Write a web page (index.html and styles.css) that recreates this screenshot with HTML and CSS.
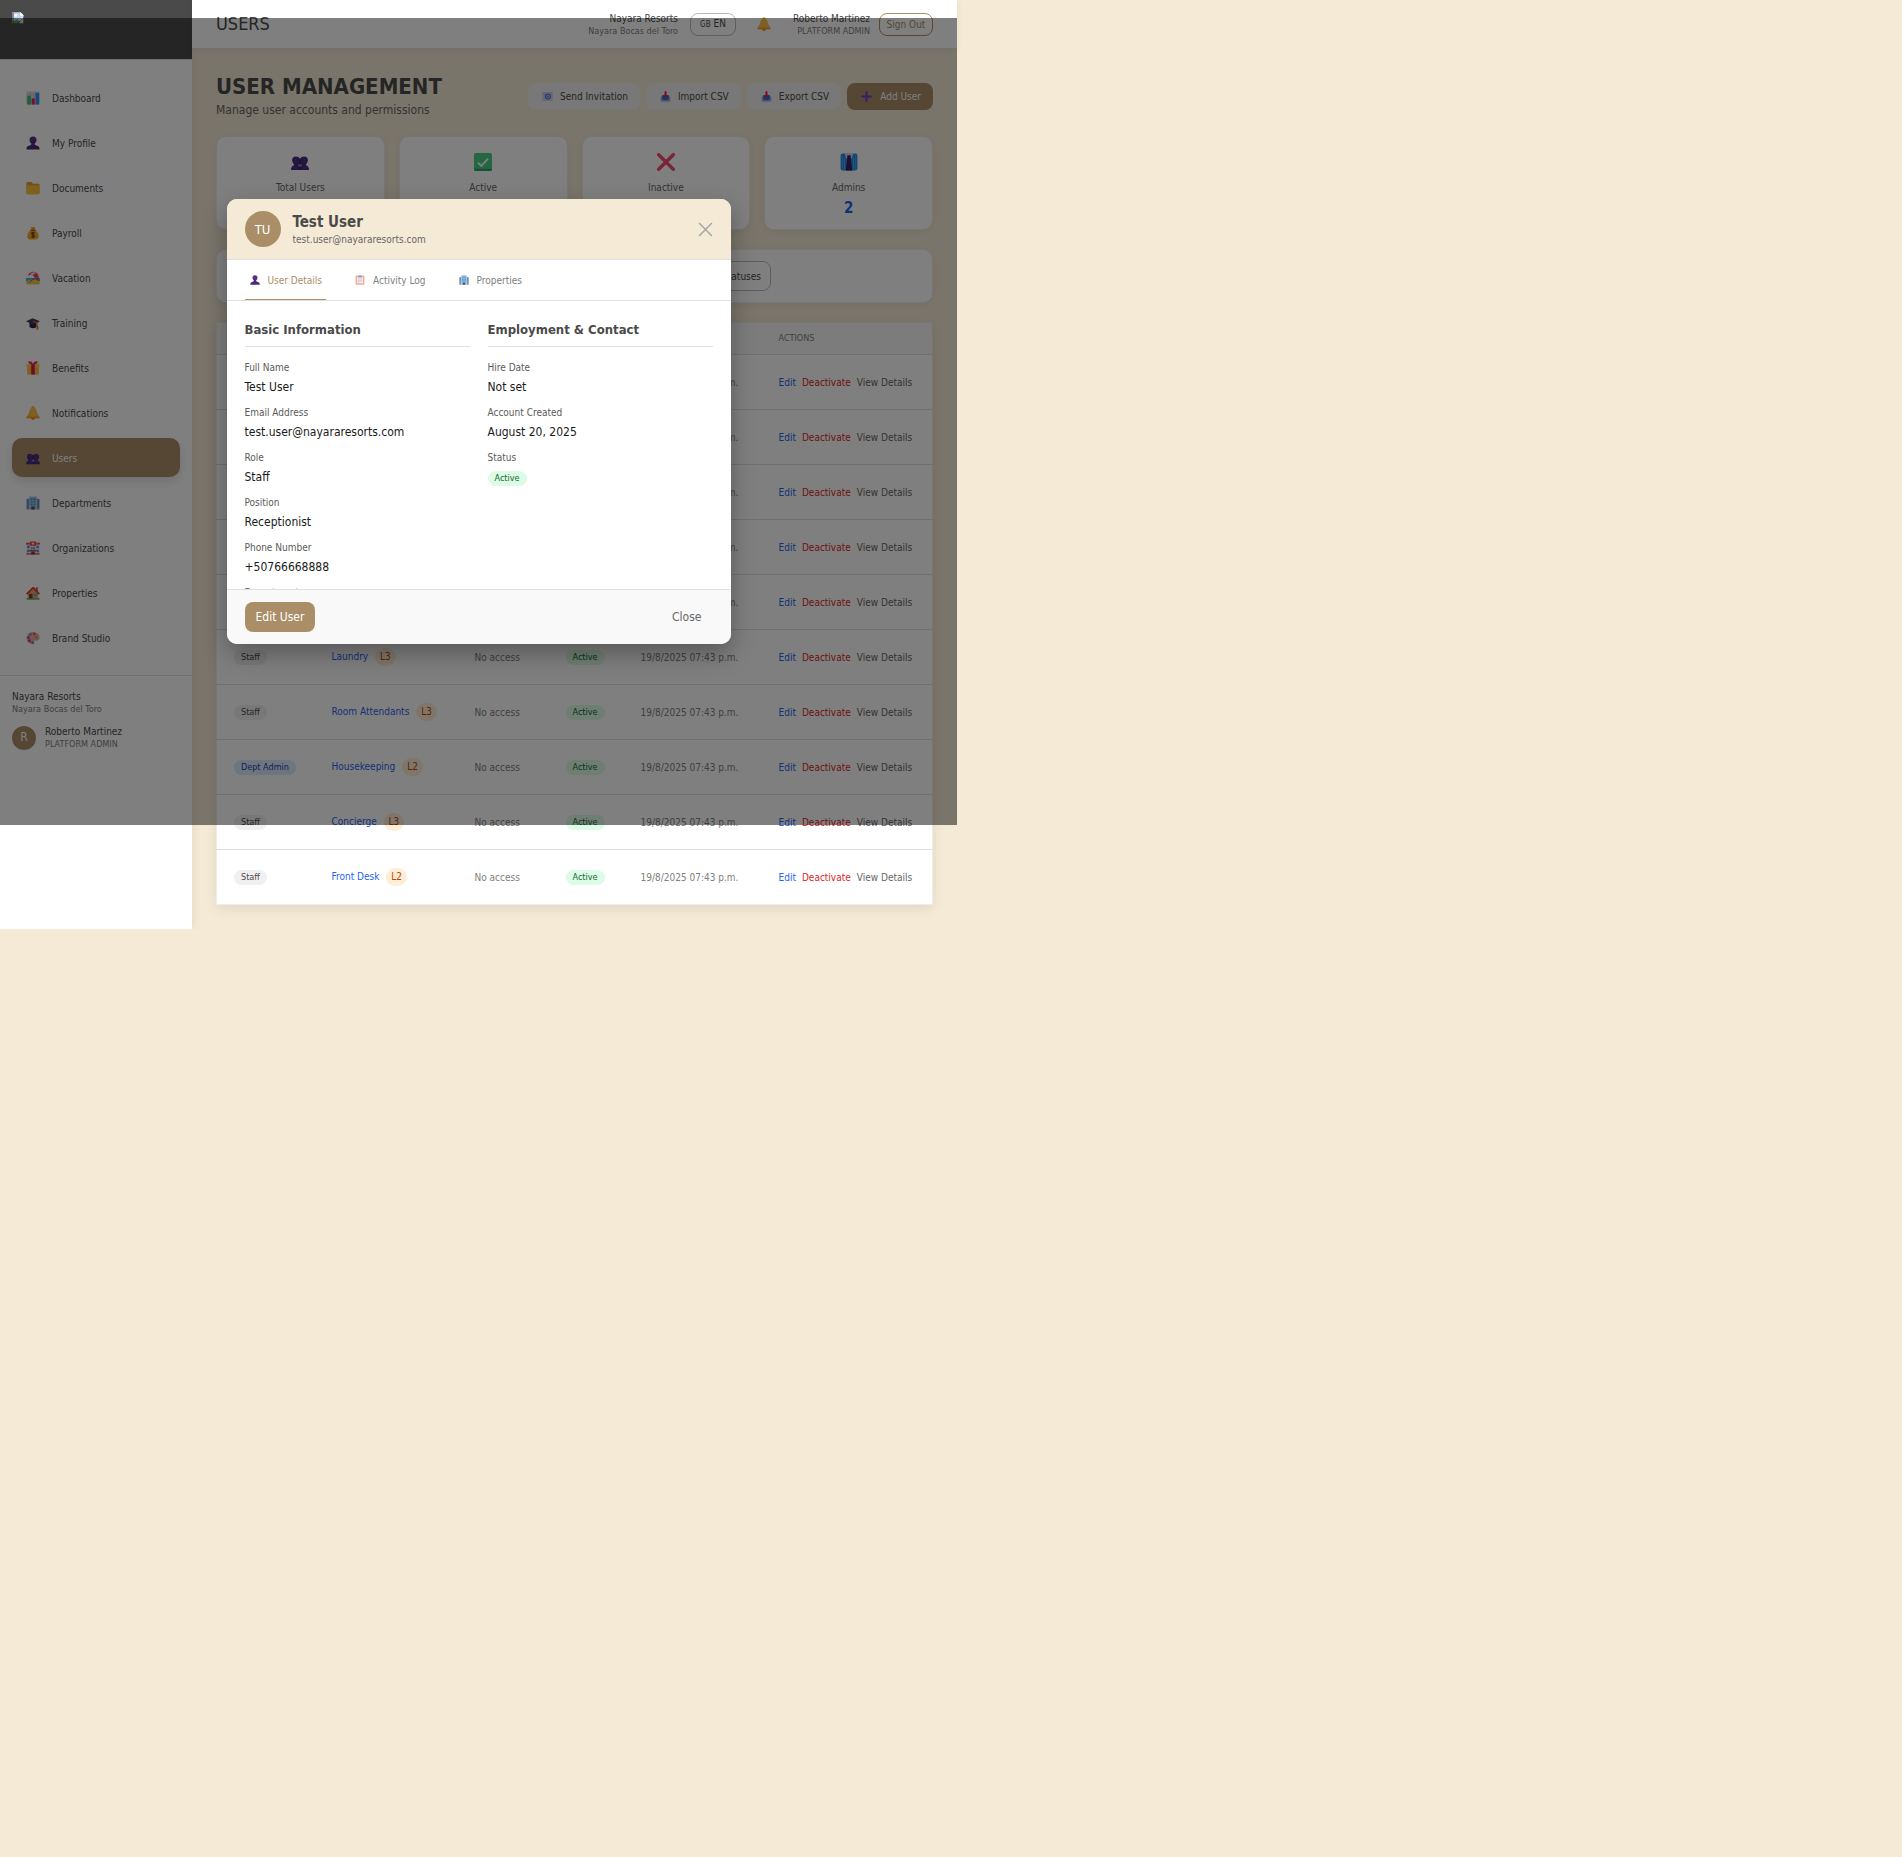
FILE: index.html
```html
<!DOCTYPE html>
<html lang="en">
<head>
<meta charset="utf-8">
<meta name="viewport" content="width=device-width, initial-scale=1">
<title>Users - Nayara Resorts</title>
<link rel="stylesheet" href="styles.css">
</head>
<body>
<svg class="sprite" aria-hidden="true">
  <symbol id="i-chart" viewBox="0 0 32 32"><rect x="1" y="1" width="30" height="30" rx="3" fill="#dcd3e6"/><path d="M1 9h30M1 17h30M1 24h30M10 1v30M21 1v30" stroke="#b9aec6" stroke-width="1"/><rect x="3" y="11" width="8" height="20" fill="#2fc173"/><rect x="13" y="17" width="7" height="14" fill="#e0245e"/><rect x="22" y="4" width="8" height="27" fill="#2a8ff0"/></symbol>
  <symbol id="i-person" viewBox="0 0 32 32"><circle cx="16" cy="9" r="8" fill="#533188"/><path d="M12 14h8v6l9 4q2 2 2 7H1q0-5 2-7l9-4z" fill="#482a78"/></symbol>
  <symbol id="i-people" viewBox="0 0 32 32"><path d="M2 13q0-7 7-7 5 0 7 4 2-4 7-4 7 0 7 7 0 4-3 7v2q5 1 5 8H0q0-7 5-8v-2q-3-3-3-7z" fill="#4b2c7e"/><path d="M16 10v20" stroke="#331b5c" stroke-width="2"/><path d="M13 20h6v4h-6z" fill="#8c84a0"/></symbol>
  <symbol id="i-folder" viewBox="0 0 32 32"><path d="M1 5q0-3 3-3h8l4 4h12q3 0 3 3v18q0 3-3 3H4q-3 0-3-3z" fill="#e9a02c"/><path d="M1 10h30v17q0 3-3 3H4q-3 0-3-3z" fill="#fcc13f"/></symbol>
  <symbol id="i-money" viewBox="0 0 32 32"><path d="M11 2h10l-2 7h-6z" fill="#f5a623"/><path d="M12 9h8q9 6 9 14 0 8-8 8H11q-8 0-8-8 0-8 9-14z" fill="#f7a82b"/><path d="M10 8h12v3H10z" fill="#a35a20"/><path d="M20 16q-7-3-7 1 0 2 3 3t3 3q0 4-7 1M16 13v15" fill="none" stroke="#63401e" stroke-width="2.5"/></symbol>
  <symbol id="i-beach" viewBox="0 0 32 32"><path d="M0 16h32v8H0z" fill="#37b5e8"/><path d="M1 23q15-7 30 0v5q0 3-3 3H4q-3 0-3-3z" fill="#fcc23c"/><path d="M24 12L8 26" stroke="#7c4d8c" stroke-width="2"/><path d="M4 10Q10 0 20 2q11 2 10 20-4 1-6-2-1-6-7-8-3-4-7-3-4 0-6 1z" fill="#ef3b5a"/><path d="M12 4q8-3 12 2-6-1-8 5-2-3-6-2 0-3 2-5zM25 8q4 5 4 13" fill="#ffd8df"/></symbol>
  <symbol id="i-cap" viewBox="0 0 32 32"><path d="M8 15v10q8 6 16 0V15z" fill="#2d2140"/><path d="M0 12L15 5l17 7-16 8z" fill="#493562"/><path d="M16 12l10 4v11" fill="none" stroke="#f58b3c" stroke-width="2"/><path d="M24 23h4v8h-4z" fill="#e36d2b"/></symbol>
  <symbol id="i-gift" viewBox="0 0 32 32"><path d="M3 12h26v19H3z" fill="#fdbc3a"/><path d="M1 7h30v7H1z" fill="#ffd04f"/><path d="M12 7h8v24h-8z" fill="#d81b4e"/><path d="M16 8Q5 8 5 1q8-2 11 5 3-7 11-5 0 7-11 7z" fill="#ee2b5c"/></symbol>
  <symbol id="i-bell" viewBox="0 0 32 32"><circle cx="16" cy="28" r="4" fill="#e8862a"/><circle cx="16" cy="3" r="3" fill="#f9b13b"/><path d="M16 2q8 1 9 13l6 10v3H1v-3l6-10Q8 3 16 2z" fill="#fcc04a"/><path d="M2 24h28l1 4H1z" fill="#f39a2d"/></symbol>
  <symbol id="i-office" viewBox="0 0 32 32"><path d="M1 8q0-2 2-2h5v25H1zM24 6h5q2 0 2 2v23h-7z" fill="#8293b5"/><path d="M7 3q0-2 2-2h14q2 0 2 2v28H7z" fill="#b6bfd2"/><path d="M10 5h12v4H10zm0 6h12v4H10zm0 6h12v4H10zM3 10h2v15H3zM27 10h2v15h-2z" fill="#25a5e8"/><path d="M16 4v18" stroke="#b6bfd2" stroke-width="2"/><path d="M12 24h8v7h-8z" fill="#45506e"/></symbol>
  <symbol id="i-hotel" viewBox="0 0 32 32"><path d="M1 7h30v24H1z" fill="#e6dfea"/><path d="M0 4h32v4H0zM9 1h14v10H9z" fill="#ee4a4f"/><path d="M3 11h5v5H3zm21 0h5v5h-5zM3 20h5v5H3zm21 0h5v5h-5zM12 14h3v4h-3zm5 0h3v4h-3z" fill="#2f8fd9"/><path d="M9 20h14v4H9zM1 28h30v3H1z" fill="#e2433f"/><path d="M12 24h8v7h-8z" fill="#6b4a5c"/><path d="M16 3v6M13 6h6" stroke="#fff" stroke-width="2"/></symbol>
  <symbol id="i-house" viewBox="0 0 32 32"><path d="M23 3h4v9h-4z" fill="#c2562f"/><path d="M4 14L16 4l12 10v16H4z" fill="#f2a06b"/><path d="M0 17L15 2h3l14 15-3 3L16 7 3 20z" fill="#d9432f"/><path d="M7 18h8v12H7z" fill="#7b4330"/><path d="M18 17h7v7h-7z" fill="#43b5e8"/><path d="M1 28h30v3H1z" fill="#4fae50"/></symbol>
  <symbol id="i-palette" viewBox="0 0 32 32"><path d="M16 2c9 0 15 5 15 13 0 7-7 8-10 7-4-1-4 2-2 4s0 5-4 4C6 29 1 24 1 16 1 8 7 2 16 2z" fill="#f3aa94"/><circle cx="23" cy="14" r="3" fill="#a5a0a8"/><circle cx="10" cy="8" r="3" fill="#4b9be8"/><circle cx="19" cy="7" r="3" fill="#e8466b"/><circle cx="6" cy="15" r="3" fill="#8a3fc0"/><circle cx="8" cy="22" r="3" fill="#e0245e"/><circle cx="15" cy="26" r="3" fill="#2aa0d8"/></symbol>
  <symbol id="i-check" viewBox="0 0 32 32"><rect x="0" y="0" width="32" height="32" rx="3" fill="#4ccf86"/><path d="M0 28h32v1q0 3-3 3H3q-3 0-3-3z" fill="#2f9e62"/><path d="M7 17l6 6L25 10" fill="none" stroke="#fff" stroke-width="3"/></symbol>
  <symbol id="i-cross" viewBox="0 0 32 32"><path d="M3 3l26 26M29 3L3 29" stroke="#f4486f" stroke-width="6" stroke-linecap="round"/></symbol>
  <symbol id="i-shirt" viewBox="0 0 32 32"><path d="M1 5q0-4 4-4h22q4 0 4 4v22q0 4-4 4H5q-4 0-4-4z" fill="#2686e0"/><path d="M4 4v26M8 8v22M24 8v22M28 4v26" stroke="#51b1f5" stroke-width="1.5"/><path d="M8 0h16l-3 10-5-5-5 5z" fill="#d9d2ea"/><path d="M13 4h6v5l3 22H10l3-22z" fill="#39205c"/></symbol>
  <symbol id="i-clip" viewBox="0 0 32 32"><rect x="2" y="2" width="28" height="29" rx="3" fill="#f0a883"/><path d="M6 6h20v21H6z" fill="#f1e7f5"/><path d="M9 12h14M9 17h14M9 22h9" stroke="#cbbcd8" stroke-width="2"/><path d="M10 1h12v7H10z" fill="#a99bb8"/></symbol>
  <symbol id="i-mail" viewBox="0 0 32 32"><rect x="1" y="3" width="30" height="26" rx="2" fill="#dccbe6"/><path d="M1 5l15 11L31 5" fill="none" stroke="#c3afd0" stroke-width="2"/><circle cx="17" cy="16" r="9" fill="#4f7fe0"/><circle cx="17" cy="16" r="4" fill="none" stroke="#dfe8ff" stroke-width="2"/></symbol>
  <symbol id="i-tray" viewBox="0 0 32 32"><path d="M2 16h28v12q0 3-3 3H5q-3 0-3-3z" fill="#b3a6d6"/><path d="M6 12h20v12q-10 6-20 0z" fill="#2a76d2"/><path d="M13 1h6v11h5l-8 8-8-8h5z" fill="#e0245e"/></symbol>
  <symbol id="i-plus" viewBox="0 0 32 32"><path d="M16 3v26M3 16h26" stroke="#7040c8" stroke-width="6" stroke-linecap="round"/></symbol>
  <symbol id="i-broken" viewBox="0 0 16 16"><path d="M2 0h9l4 4v4l-4 4H2z" fill="#c4d5f5"/><path d="M0 0h12v1H1v14H0z" fill="#9a9a9a"/><path d="M11 0l5 5h-5z" fill="#fff"/><path d="M3 3h4v3H3z" fill="#fff"/><path d="M2 14q3-6 7-3l-2 4H2z" fill="#4fa83c"/><path d="M15 8v7H9z" fill="#d4d4d4"/><path d="M15 6L8 13" stroke="#fff"/></symbol>
</svg>

<div class="app">
  <aside class="sidebar">
    <div class="brand"><svg class="logo" role="img" aria-label="Logo"><use href="#i-broken"/></svg></div>
    <nav class="nav">
      <a href="#"><svg><use href="#i-chart"/></svg>Dashboard</a>
      <a href="#"><svg><use href="#i-person"/></svg>My Profile</a>
      <a href="#"><svg><use href="#i-folder"/></svg>Documents</a>
      <a href="#"><svg><use href="#i-money"/></svg>Payroll</a>
      <a href="#"><svg><use href="#i-beach"/></svg>Vacation</a>
      <a href="#"><svg><use href="#i-cap"/></svg>Training</a>
      <a href="#"><svg><use href="#i-gift"/></svg>Benefits</a>
      <a href="#"><svg><use href="#i-bell"/></svg>Notifications</a>
      <a href="#" class="current" aria-current="page"><svg><use href="#i-people"/></svg>Users</a>
      <a href="#"><svg><use href="#i-office"/></svg>Departments</a>
      <a href="#"><svg><use href="#i-hotel"/></svg>Organizations</a>
      <a href="#"><svg><use href="#i-house"/></svg>Properties</a>
      <a href="#"><svg><use href="#i-palette"/></svg>Brand Studio</a>
    </nav>
    <div class="account">
      <div class="name">Nayara Resorts</div>
      <div class="sub">Nayara Bocas del Toro</div>
      <div class="who">
        <span class="avatar">R</span>
        <div><div class="name">Roberto Martinez</div><div class="sub">PLATFORM ADMIN</div></div>
      </div>
    </div>
  </aside>

  <div class="page">
    <header class="topbar">
      <div class="page-name">USERS</div>
      <div class="org"><div class="name">Nayara Resorts</div><div class="sub">Nayara Bocas del Toro</div></div>
      <button class="lang" type="button"><small>GB</small> EN</button>
      <button class="bell" type="button" aria-label="Notifications"><svg><use href="#i-bell"/></svg></button>
      <div class="me"><div class="name">Roberto Martinez</div><div class="sub">PLATFORM ADMIN</div></div>
      <button class="signout" type="button">Sign Out</button>
    </header>

    <main class="content">
      <div class="heading">
        <div><h1>USER MANAGEMENT</h1><p>Manage user accounts and permissions</p></div>
        <div class="tools">
          <button type="button"><svg><use href="#i-mail"/></svg>Send Invitation</button>
          <button type="button"><svg><use href="#i-tray"/></svg>Import CSV</button>
          <button type="button"><svg><use href="#i-tray"/></svg>Export CSV</button>
          <button type="button" class="primary"><svg><use href="#i-plus"/></svg>Add User</button>
        </div>
      </div>

      <section class="stats">
        <div class="card"><svg><use href="#i-people"/></svg><span>Total Users</span><strong>11</strong></div>
        <div class="card"><svg><use href="#i-check"/></svg><span>Active</span><strong>11</strong></div>
        <div class="card"><svg><use href="#i-cross"/></svg><span>Inactive</span><strong>0</strong></div>
        <div class="card"><svg><use href="#i-shirt"/></svg><span>Admins</span><strong>2</strong></div>
      </section>

      <section class="filters">
        <input type="search" aria-label="Search users" placeholder="Search users...">
        <select aria-label="Status"><option>All Statuses</option></select>
      </section>

      <table class="users">
        <colgroup><col class="c-role"><col class="c-dept"><col class="c-prop"><col class="c-stat"><col class="c-date"><col></colgroup>
        <thead><tr><th>ROLE</th><th>DEPARTMENT</th><th>PROPERTIES</th><th>STATUS</th><th>CREATED</th><th>ACTIONS</th></tr></thead>
        <tbody>
          <tr><td><span class="tag">Staff</span></td><td><a href="#">Front Desk</a> <span class="level">L2</span></td><td>No access</td><td><span class="tag ok">Active</span></td><td>19/8/2025 07:43 p.m.</td><td><div class="acts"><a href="#">Edit</a><a href="#" class="danger">Deactivate</a><a href="#" class="plain">View Details</a></div></td></tr>
          <tr><td><span class="tag">Staff</span></td><td><a href="#">Front Desk</a> <span class="level">L2</span></td><td>No access</td><td><span class="tag ok">Active</span></td><td>19/8/2025 07:43 p.m.</td><td><div class="acts"><a href="#">Edit</a><a href="#" class="danger">Deactivate</a><a href="#" class="plain">View Details</a></div></td></tr>
          <tr><td><span class="tag">Staff</span></td><td><a href="#">Front Desk</a> <span class="level">L2</span></td><td>No access</td><td><span class="tag ok">Active</span></td><td>19/8/2025 07:43 p.m.</td><td><div class="acts"><a href="#">Edit</a><a href="#" class="danger">Deactivate</a><a href="#" class="plain">View Details</a></div></td></tr>
          <tr><td><span class="tag">Staff</span></td><td><a href="#">Front Desk</a> <span class="level">L2</span></td><td>No access</td><td><span class="tag ok">Active</span></td><td>19/8/2025 07:43 p.m.</td><td><div class="acts"><a href="#">Edit</a><a href="#" class="danger">Deactivate</a><a href="#" class="plain">View Details</a></div></td></tr>
          <tr><td><span class="tag">Staff</span></td><td><a href="#">Front Desk</a> <span class="level">L2</span></td><td>No access</td><td><span class="tag ok">Active</span></td><td>19/8/2025 07:43 p.m.</td><td><div class="acts"><a href="#">Edit</a><a href="#" class="danger">Deactivate</a><a href="#" class="plain">View Details</a></div></td></tr>
          <tr><td><span class="tag">Staff</span></td><td><a href="#">Laundry</a> <span class="level">L3</span></td><td>No access</td><td><span class="tag ok">Active</span></td><td>19/8/2025 07:43 p.m.</td><td><div class="acts"><a href="#">Edit</a><a href="#" class="danger">Deactivate</a><a href="#" class="plain">View Details</a></div></td></tr>
          <tr><td><span class="tag">Staff</span></td><td><a href="#">Room Attendants</a> <span class="level">L3</span></td><td>No access</td><td><span class="tag ok">Active</span></td><td>19/8/2025 07:43 p.m.</td><td><div class="acts"><a href="#">Edit</a><a href="#" class="danger">Deactivate</a><a href="#" class="plain">View Details</a></div></td></tr>
          <tr><td><span class="tag dept">Dept Admin</span></td><td><a href="#">Housekeeping</a> <span class="level">L2</span></td><td>No access</td><td><span class="tag ok">Active</span></td><td>19/8/2025 07:43 p.m.</td><td><div class="acts"><a href="#">Edit</a><a href="#" class="danger">Deactivate</a><a href="#" class="plain">View Details</a></div></td></tr>
          <tr><td><span class="tag">Staff</span></td><td><a href="#">Concierge</a> <span class="level">L3</span></td><td>No access</td><td><span class="tag ok">Active</span></td><td>19/8/2025 07:43 p.m.</td><td><div class="acts"><a href="#">Edit</a><a href="#" class="danger">Deactivate</a><a href="#" class="plain">View Details</a></div></td></tr>
          <tr><td><span class="tag">Staff</span></td><td><a href="#">Front Desk</a> <span class="level">L2</span></td><td>No access</td><td><span class="tag ok">Active</span></td><td>19/8/2025 07:43 p.m.</td><td><div class="acts"><a href="#">Edit</a><a href="#" class="danger">Deactivate</a><a href="#" class="plain">View Details</a></div></td></tr>
        </tbody>
      </table>
    </main>
  </div>

  <div class="overlay">
    <div class="modal" role="dialog" aria-modal="true" aria-labelledby="modal-title">
      <div class="modal-head">
        <span class="avatar big">TU</span>
        <div class="ident"><h2 id="modal-title">Test User</h2><p>test.user@nayararesorts.com</p></div>
        <button class="x" type="button" aria-label="Close dialog"><svg viewBox="0 0 14 14"><path d="M1 1l12 12M13 1L1 13"/></svg></button>
      </div>
      <div class="tabs" role="tablist">
        <button type="button" role="tab" aria-selected="true"><svg><use href="#i-person"/></svg>User Details</button>
        <button type="button" role="tab" aria-selected="false"><svg><use href="#i-clip"/></svg>Activity Log</button>
        <button type="button" role="tab" aria-selected="false"><svg><use href="#i-office"/></svg>Properties</button>
      </div>
      <div class="modal-body">
        <section>
          <h3>Basic Information</h3>
          <dl>
            <dt>Full Name</dt><dd>Test User</dd>
            <dt>Email Address</dt><dd>test.user@nayararesorts.com</dd>
            <dt>Role</dt><dd>Staff</dd>
            <dt>Position</dt><dd>Receptionist</dd>
            <dt>Phone Number</dt><dd>+50766668888</dd>
            <dt>Department</dt><dd>Front Desk</dd>
          </dl>
        </section>
        <section>
          <h3>Employment &amp; Contact</h3>
          <dl>
            <dt>Hire Date</dt><dd>Not set</dd>
            <dt>Account Created</dt><dd>August 20, 2025</dd>
            <dt>Status</dt><dd><span class="tag ok">Active</span></dd>
          </dl>
        </section>
      </div>
      <div class="modal-foot">
        <button class="primary" type="button">Edit User</button>
        <button class="close" type="button">Close</button>
      </div>
    </div>
  </div>
</div>
</body>
</html>
```
FILE: styles.css
```css
:root {
  --sand: #f5ead6;
  --brown: #aa8e67;
  --ink: #4a4a4a;
  --soft: #666;
  --line: #e0e0e0;
  --muted: #808080;
}

* { box-sizing: border-box; }

body {
  margin: 0;
  background: var(--sand);
  color: var(--ink);
  font: 10px/15px "DejaVu Sans Condensed", "Noto Sans", sans-serif;
}

h1, h2, h3, p, dl, dd { margin: 0; }
a { color: #2563eb; text-decoration: none; }
button, input, select { font: inherit; color: inherit; margin: 0; padding: 0; border: 0; background: none; }
button { cursor: pointer; }
svg { display: block; flex: none; }
.sprite { position: absolute; width: 0; height: 0; }

.app {
  position: relative;
  display: grid;
  grid-template-columns: 192px 1fr;
  max-width: 957px;
}

.name { color: var(--ink); line-height: 14px; }
.sub { color: var(--muted); font-size: 9px; line-height: 11px; }

.avatar {
  display: flex;
  align-items: center;
  justify-content: center;
  width: 24px;
  height: 24px;
  border-radius: 50%;
  background: var(--brown);
  color: #fff;
  font-size: 12px;
}
.avatar.big { width: 36px; height: 36px; font-size: 13px; }

/* Sidebar */
.sidebar { background: #fff; box-shadow: 2px 0 8px rgba(0, 0, 0, .06); }
.brand { height: 60px; padding: 12px; background: var(--ink); border-bottom: 1px solid var(--line); }
.logo { width: 12px; height: 12px; }
.nav { display: grid; gap: 6px; padding: 18px 12px; }
.nav a {
  display: flex;
  align-items: center;
  gap: 12px;
  height: 39px;
  padding: 1px 14px 0;
  border-radius: 10px;
  color: var(--ink);
}
.nav svg { width: 14px; height: 14px; }
.nav .current { background: var(--brown); color: #fff; box-shadow: 0 4px 10px rgba(0, 0, 0, .12); }
.account { padding: 14px 12px; border-top: 1px solid var(--line); }
.who { display: flex; align-items: center; gap: 9px; margin-top: 10px; }

/* Top bar */
.page { min-width: 0; }
.topbar {
  display: flex;
  align-items: center;
  height: 49px;
  padding: 0 24px;
  background: #fff;
  border-bottom: 1px solid var(--line);
  box-shadow: 0 2px 8px rgba(0, 0, 0, .06);
}
.page-name { flex: 1; font-size: 18px; line-height: 24px; }
.org, .me { text-align: right; }
.me { min-width: 79px; }
.lang {
  width: 46px;
  height: 23px;
  margin-left: 12px;
  border: 1px solid #bbb;
  border-radius: 8px;
}
.lang small { font-size: 8px; }
.bell { margin: 0 20px 0 21px; }
.bell svg { width: 14px; height: 14px; }
.signout {
  width: 54px;
  height: 23px;
  margin-left: 9px;
  border: 1px solid var(--brown);
  border-radius: 8px;
  color: var(--brown);
}

/* Content */
.content { padding: 24px; }
.heading { display: flex; align-items: center; justify-content: space-between; margin-bottom: 17px; }
.heading h1 { font-size: 22px; line-height: 28px; }
.heading p { color: var(--soft); font-size: 12px; line-height: 18px; }
.tools { display: flex; gap: 6px; }
.tools button {
  display: flex;
  align-items: center;
  gap: 7px;
  height: 27px;
  padding: 0 12px 0 14px;
  border-radius: 8px;
  background: #f0f0f0;
}
.tools svg { width: 11px; height: 11px; }
.tools button.primary { gap: 8px; background: var(--brown); }
button.primary { background: var(--brown); color: #fff; }

.stats { display: grid; grid-template-columns: repeat(4, 1fr); gap: 14px; margin-bottom: 19px; }
.card, .filters {
  background: #fff;
  border: 1px solid #ececec;
  border-radius: 10px;
  box-shadow: 0 2px 8px rgba(0, 0, 0, .06);
}
.card { display: flex; flex-direction: column; align-items: center; height: 94px; padding-top: 16px; }
.card svg { width: 18px; height: 18px; }
.card span { margin: 9px 0 3px; color: var(--soft); }
.card strong { color: #2563eb; font-size: 15px; line-height: 21px; }

.filters {
  display: grid;
  grid-template-columns: 353px 178px;
  gap: 12px;
  padding: 11px;
  margin-bottom: 19px;
}
.filters input, .filters select {
  height: 30px;
  border: 1px solid #bbb;
  border-radius: 8px;
  padding: 0 9px;
  appearance: none;
}
.filters select { text-align: right; text-align-last: right; }

.users {
  width: 100%;
  table-layout: fixed;
  border-collapse: collapse;
  background: #fff;
  border: 1px solid #ececec;
  box-shadow: 0 4px 12px rgba(0, 0, 0, .08);
}
.c-role { width: 98px; }
.c-dept { width: 143px; }
.c-prop { width: 91px; }
.c-stat { width: 75px; }
.c-date { width: 138px; }
.users th {
  height: 32px;
  padding: 0 17px 1px;
  background: #f9f9f9;
  color: var(--muted);
  font-size: 9px;
  font-weight: normal;
  text-align: left;
}
.users td { height: 55px; padding: 0 0 0 17px; border-top: 1px solid var(--line); color: var(--muted); white-space: nowrap; }
.acts { display: flex; gap: 6px; }
.acts .danger { color: #dc2626; }
.acts .plain { color: var(--soft); }

.tag {
  display: inline-block;
  padding: 0 7px;
  border-radius: 8px;
  background: #f0f0f0;
  color: var(--ink);
  font-size: 9px;
  line-height: 15px;
}
.tag.ok { background: #dcfce7; color: #166534; }
.tag.dept { background: #dbeafe; color: #1e40af; }
.level {
  display: inline-block;
  margin-left: 4px;
  padding: 0 5px;
  border-radius: 9px;
  background: #ffedd5;
  color: #c2410c;
  line-height: 18px;
}

/* User dialog, laid over the page */
.overlay {
  position: absolute;
  inset: 18px 0 104px;
  display: flex;
  align-items: center;
  justify-content: center;
  background: rgba(0, 0, 0, .5);
}
.modal {
  display: flex;
  flex-direction: column;
  width: 504px;
  max-height: 445px;
  overflow: hidden;
  border-radius: 10px;
  background: #fff;
  box-shadow: 0 10px 24px rgba(0, 0, 0, .3);
}
.modal-head {
  display: flex;
  align-items: center;
  gap: 12px;
  padding: 12px 18px;
  background: var(--sand);
  border-bottom: 1px solid var(--line);
}
.ident { flex: 1; }
.ident h2 { font-size: 15px; line-height: 22px; }
.ident p { color: var(--soft); line-height: 14px; }
.x svg { width: 15px; height: 15px; fill: none; stroke: #a3a3a3; stroke-width: 1.3; }
.tabs { display: flex; gap: 24px; padding: 0 18px; border-bottom: 1px solid var(--line); }
.tabs button {
  display: flex;
  align-items: center;
  gap: 8px;
  height: 40px;
  padding: 1px 4px 0 5px;
  border-bottom: 1px solid transparent;
  color: var(--muted);
}
.tabs svg { width: 10px; height: 10px; }
.tabs [aria-selected="true"] { color: var(--brown); border-color: var(--brown); }
.modal-body {
  flex: 1;
  display: grid;
  grid-template-columns: 1fr 1fr;
  gap: 18px;
  min-height: 0;
  padding: 18px;
  overflow-y: auto;
  scrollbar-width: none;
}
.modal-body h3 { padding-bottom: 5px; border-bottom: 1px solid var(--line); font-size: 13px; line-height: 22px; margin-bottom: 12px; }
.modal-body dt { color: #5a5a5a; line-height: 18px; }
.modal-body dd { margin-bottom: 6px; color: #1a1a1a; font-size: 12px; line-height: 21px; }
.modal-foot {
  display: flex;
  align-items: center;
  justify-content: space-between;
  padding: 12px 18px;
  background: #f9f9f9;
  border-top: 1px solid var(--line);
}
.modal-foot button { height: 30px; padding: 1px 11px 0; border-radius: 8px; font-size: 12px; }
.modal-foot .close { color: var(--soft); }
```
